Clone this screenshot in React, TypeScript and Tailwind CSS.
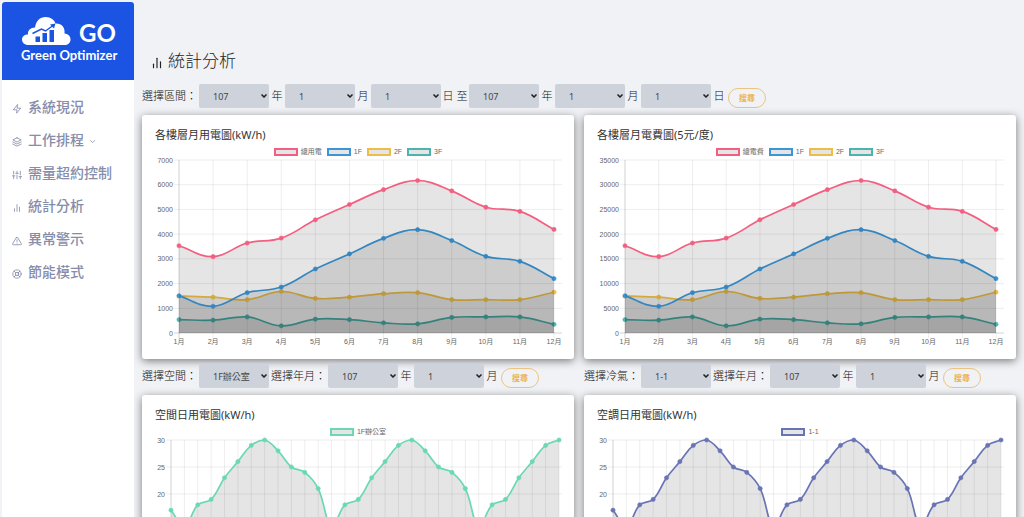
import { useState } from 'react';
import { FiAlertTriangle, FiBarChart2, FiChevronDown, FiLayers, FiLifeBuoy, FiSliders, FiZap } from 'react-icons/fi';

type Series = { label: string; color: string; data: number[] };

const menu = [
    { name: '系統現況', Icon: FiZap },
    { name: '工作排程', Icon: FiLayers, sub: true },
    { name: '需量超約控制', Icon: FiSliders },
    { name: '統計分析', Icon: FiBarChart2 },
    { name: '異常警示', Icon: FiAlertTriangle },
    { name: '節能模式', Icon: FiLifeBuoy }
];

const floorUsage: Series[] = [
    { label: '總用電', color: '#f25f82', data: [3530, 3090, 3640, 3840, 4580, 5200, 5800, 6170, 5750, 5090, 4920, 4190] },
    { label: '1F', color: '#3a96d6', data: [1500, 1080, 1630, 1860, 2590, 3200, 3830, 4180, 3740, 3100, 2900, 2200] },
    { label: '2F', color: '#ecbe48', data: [1500, 1450, 1350, 1680, 1400, 1450, 1590, 1630, 1350, 1350, 1350, 1650] },
    { label: '3F', color: '#4bb5ad', data: [540, 520, 650, 290, 560, 540, 410, 370, 630, 650, 650, 350] }
];

// 電費 = 用電 x 5元
const floorCost: Series[] = floorUsage.map((s, i) => ({
    ...s,
    label: i === 0 ? '總電費' : s.label,
    data: s.data.map((v) => v * 5)
}));

const daily = [
    17, 14, 18, 19, 23, 26, 29, 30, 28, 25, 24, 21, 14, 18, 19,
    23, 26, 29, 30, 28, 25, 24, 21, 14, 18, 19, 23, 26, 29, 30
];

const months = Array.from({ length: 12 }, (_, i) => `${i + 1}月`);
const days = Array.from({ length: 30 }, (_, i) => `${i + 1}`);
const years = ['107', '108', '109'];
const monthOptions = Array.from({ length: 12 }, (_, i) => `${i + 1}`);
const dayOptions = Array.from({ length: 31 }, (_, i) => `${i + 1}`);

const TOP = 2;

// 平滑曲線 (tension 0.4)
function curve(pts: number[][], bottom: number) {
    const clamp = (y: number) => Math.min(bottom, Math.max(TOP, y));
    const ctrl = pts.map((p, i) => {
        const a = pts[i - 1] || p;
        const b = pts[i + 1] || p;
        const d1 = Math.hypot(p[0] - a[0], p[1] - a[1]);
        const d2 = Math.hypot(b[0] - p[0], b[1] - p[1]);
        const f1 = (0.4 * d1) / (d1 + d2);
        const f2 = (0.4 * d2) / (d1 + d2);
        return [
            p[0] - f1 * (b[0] - a[0]), clamp(p[1] - f1 * (b[1] - a[1])),
            p[0] + f2 * (b[0] - a[0]), clamp(p[1] + f2 * (b[1] - a[1]))
        ];
    });
    let d = `M${pts[0][0]} ${pts[0][1]}`;
    for (let i = 1; i < pts.length; i++) {
        d += `C${ctrl[i - 1][2]} ${ctrl[i - 1][3]} ${ctrl[i][0]} ${ctrl[i][1]} ${pts[i][0]} ${pts[i][1]}`;
    }
    return d;
}

type ChartProps = {
    title: string;
    series: Series[];
    labels: string[];
    max: number;
    step: number;
    left: number;
    right: number;
    bottom: number;
};

function ChartCard({ title, series, labels, max, step, left, right, bottom }: ChartProps) {
    const x = (i: number) => left + ((right - left) * i) / (labels.length - 1);
    const y = (v: number) => bottom - ((bottom - TOP) * v) / max;
    const ticks = Array.from({ length: max / step + 1 }, (_, i) => i * step);

    return (
        <section className="rounded-[3px] bg-white px-3 pt-2.5 pb-[11px] shadow-[0_2px_8px_rgba(0,0,0,0.5)]">
            <h2 className="pl-px text-[11px] leading-5 text-[#333]">{title}</h2>
            <div className="flex h-[13px] items-center justify-center gap-[5px] text-[7px] leading-none text-[#666] font-['Liberation_Sans','Noto_Sans_CJK_TC',sans-serif]">
                {series.map((s) => (
                    <span key={s.label} className="flex items-center gap-[3px]">
                        <span className="h-2 w-6 border-2 bg-[#e5e5e5]" style={{ borderColor: s.color }} />
                        {s.label}
                    </span>
                ))}
            </div>
            <svg
                viewBox="0 0 408 190"
                className="block w-full overflow-visible font-['Liberation_Sans','Noto_Sans_CJK_TC',sans-serif]"
                role="img"
                aria-label={title}
            >
                {ticks.map((t) => (
                    <g key={t}>
                        <line x1={left - 5} x2={408} y1={y(t)} y2={y(t)} stroke="#000" strokeOpacity={t === 0 ? 0.25 : 0.1} strokeWidth="0.7" />
                        <text x={left - 6} y={y(t) + 2.5} textAnchor="end" fontSize="7" fill="#666">{t}</text>
                    </g>
                ))}
                {labels.map((l, i) => (
                    <g key={l}>
                        <line x1={x(i)} x2={x(i)} y1={TOP} y2={bottom + 5} stroke="#000" strokeOpacity={i === 0 ? 0.25 : 0.1} strokeWidth="0.7" />
                        <text x={x(i)} y={bottom + 11} textAnchor="middle" fontSize="7" fill="#666">{l}</text>
                    </g>
                ))}
                {[...series].reverse().map((s) => {
                    const pts = s.data.map((v, i) => [x(i), y(v)]);
                    const d = curve(pts, bottom);
                    return (
                        <g key={s.label}>
                            <path d={`${d}L${right} ${bottom}L${left} ${bottom}Z`} fill="#000" fillOpacity="0.1" />
                            <path d={d} fill="none" stroke={s.color} strokeWidth="1.7" />
                            {pts.map((p) => (
                                <circle key={p[0]} cx={p[0]} cy={p[1]} r="2.1" fill={s.color} stroke={s.color} strokeWidth="0.6" />
                            ))}
                        </g>
                    );
                })}
            </svg>
        </section>
    );
}

function Picker({ label, options }: { label: string; options: string[] }) {
    const [value, setValue] = useState(options[0]);
    return (
        <span className="relative">
            <select
                aria-label={label}
                value={value}
                onChange={(e) => setValue(e.target.value)}
                className="block h-6 w-[70px] appearance-none rounded-[2px] bg-[#ced3db] pt-px pl-3.5 text-[9px] font-normal text-[#444]"
            >
                {options.map((o) => (
                    <option key={o}>{o}</option>
                ))}
            </select>
            <FiChevronDown size={8} strokeWidth={5} className="pointer-events-none absolute top-2 right-px text-[#222]" />
        </span>
    );
}

function Label({ children }: { children: string }) {
    return <span className="px-0.5">{children}</span>;
}

function Unit({ children }: { children: string }) {
    return <span className="w-4 text-center">{children}</span>;
}

function SearchButton() {
    return (
        <button type="button" className="mt-1 ml-px h-5 w-[38px] rounded-full border border-[#ebc384] text-[8px] leading-none font-bold text-[#ecb557]">
            搜尋
        </button>
    );
}

function DayFilter({ label, options }: { label: string; options: string[] }) {
    return (
        <form className="-ml-0.5 mt-[5px] mb-[7px] flex h-6 items-center font-light whitespace-nowrap text-[#111]" onSubmit={(e) => e.preventDefault()}>
            <Label>{`${label}：`}</Label>
            <Picker label={label} options={options} />
            <Label>選擇年月：</Label>
            <Picker label="年" options={years} />
            <Unit>年</Unit>
            <Picker label="月" options={monthOptions} />
            <Unit>月</Unit>
            <SearchButton />
        </form>
    );
}

function Logo() {
    return (
        <a href="/" className="block rounded-t-[3px] bg-[#1b54e2] pt-[13px] pb-[16px] pl-[19px] text-white font-['Lato','Noto_Sans',sans-serif]">
            <span className="flex h-8 items-center gap-2">
                <svg viewBox="0 0 50 30" className="h-[30px] w-[50px]" aria-hidden="true">
                    <path d="M7.500 29C3.500 29 1 26.500 1 23.500C1 20.500 3.500 18.500 7 18.500C6.500 14.500 9.500 11.500 14 11.500C15 5 19 1 24.500 1C30 1 33.500 4 34.500 7.500C40 7 44.500 11 43.500 17.500C47.500 18 49.500 20.500 49.500 23.500C49.500 27 47 29 43.500 29Z" fill="#fff" />
                    <path d="M14.500 20.500h4.500v5.500h-4.500zM21.500 17h4.500v9h-4.500zM28.500 14h4.500v12h-4.500z" fill="#1b54e2" />
                    <path d="M11.500 17.500L20.500 13L24.500 15L32 9.500" fill="none" stroke="#1b54e2" strokeWidth="1.400" />
                    <path d="M29 8.500L34.500 7.500L33 12.500z" fill="#1b54e2" />
                </svg>
                <span className="pt-1 text-[24px] leading-8 font-bold">GO</span>
            </span>
            <span className="block text-[13px] leading-[17px] font-bold">Green Optimizer</span>
        </a>
    );
}

export default function App() {
    return (
        <div className="flex h-screen overflow-hidden bg-[#f0f2f5] text-[#333] font-['Noto_Sans','Noto_Sans_CJK_TC',sans-serif]">
            <aside className="mt-0.5 ml-0.5 w-[132px] shrink-0 bg-white">
                <Logo />
                <nav className="mt-2.5">
                    {menu.map(({ name, Icon, sub }) => (
                        <a key={name} href="#" className="flex h-[33px] items-center gap-1.5 pl-2.5 text-[14px] font-medium text-[#868dab]">
                            <Icon size={10} className="mt-1 shrink-0" />
                            <span className="whitespace-nowrap">{name}</span>
                            {sub && <FiChevronDown size={9} className="-ml-0.5 mt-1" />}
                        </a>
                    ))}
                </nav>
            </aside>

            <main className="min-w-0 flex-1 overflow-y-auto pr-2 pb-4 pl-2 text-[11px] [scrollbar-width:none]">
                <h1 className="mt-[49px] flex h-6 items-center gap-1 pl-2 text-[17px] font-light text-[#222]">
                    <FiBarChart2 size={14} className="mt-1" />
                    統計分析
                </h1>
                <form className="-ml-0.5 mt-[11px] mb-[7px] flex h-6 items-center font-light whitespace-nowrap text-[#111]" onSubmit={(e) => e.preventDefault()}>
                    <Label>選擇區間：</Label>
                    <Picker label="開始年" options={years} />
                    <Unit>年</Unit>
                    <Picker label="開始月" options={monthOptions} />
                    <Unit>月</Unit>
                    <Picker label="開始日" options={dayOptions} />
                    <span className="w-7 text-center">日 至</span>
                    <Picker label="結束年" options={years} />
                    <Unit>年</Unit>
                    <Picker label="結束月" options={monthOptions} />
                    <Unit>月</Unit>
                    <Picker label="結束日" options={dayOptions} />
                    <Unit>日</Unit>
                    <SearchButton />
                </form>

                <div className="grid grid-cols-2 gap-x-2.5">
                    <ChartCard title="各樓層月用電圖(kW/h)" series={floorUsage} labels={months} max={7000} step={1000} left={25} right={400} bottom={175} />
                    <ChartCard title="各樓層月電費圖(5元/度)" series={floorCost} labels={months} max={35000} step={5000} left={29} right={400} bottom={175} />
                    <DayFilter label="選擇空間" options={['1F辦公室', '2F辦公室', '3F辦公室']} />
                    <DayFilter label="選擇冷氣" options={['1-1', '1-2', '2-1']} />
                    <ChartCard title="空間日用電圖(kW/h)" series={[{ label: '1F辦公室', color: '#6ad9b3', data: daily }]} labels={days} max={30} step={5} left={17} right={405} bottom={164} />
                    <ChartCard title="空調日用電圖(kW/h)" series={[{ label: '1-1', color: '#6974b4', data: daily }]} labels={days} max={30} step={5} left={17} right={405} bottom={164} />
                </div>
            </main>
        </div>
    );
}
